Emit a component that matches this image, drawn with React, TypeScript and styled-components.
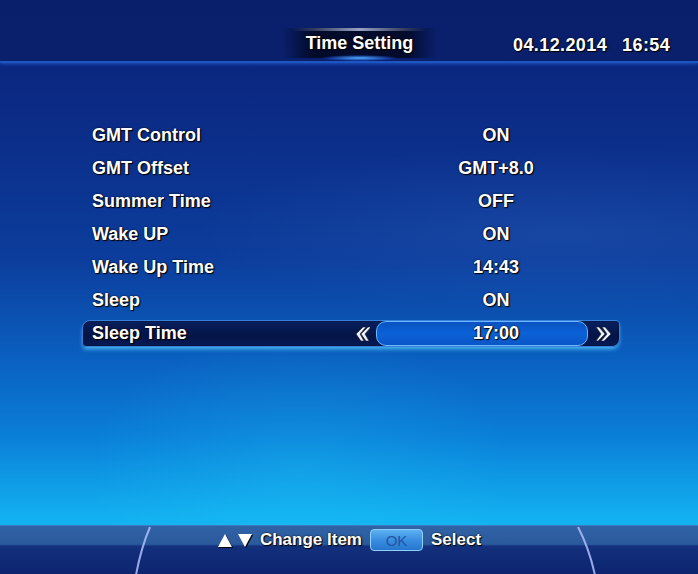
import React from "react";
import styled, { createGlobalStyle } from "styled-components";

const Global = createGlobalStyle`
  html, body { margin: 0; padding: 0; background: #061a5e; }
  body { font-family: "Liberation Sans", Arial, sans-serif; }
  * { box-sizing: border-box; }
`;

const Screen = styled.div`
  position: relative;
  width: 698px;
  height: 574px;
  overflow: hidden;
  display: flex;
  flex-direction: column;
  background:
    radial-gradient(ellipse 520px 120px at 560px 230px, rgba(120,170,255,0.10), transparent 70%),
    radial-gradient(ellipse 300px 200px at 300px 470px, rgba(40,220,255,0.18), transparent 70%),
    linear-gradient(180deg, #0a2278 0%, #0b2b86 20%, #0c3d9c 45%, #0a5fbf 62%, #0a7fd8 76%, #12b0f0 90%, #18bdf5 100%);
  color: #fff;
  font-weight: bold;
  text-shadow: 1px 1px 1px #000, 0 0 2px #000;
`;

const Header = styled.div`
  height: 63px;
  flex: 0 0 63px;
  background: linear-gradient(180deg, #0a1f6c 0%, #0a206c 100%);
  border-bottom: 2px solid #1e56c0;
  box-shadow: 0 1px 3px rgba(60,120,255,0.5);
  position: relative;
`;

const TitleWrap = styled.div`
  position: absolute;
  left: 282px;
  top: 28px;
  width: 155px;
  height: 30px;
  display: flex;
  align-items: center;
  justify-content: center;
  background: linear-gradient(90deg, rgba(0,10,40,0) 0%, rgba(0,8,35,0.9) 20%, rgba(0,8,35,0.9) 80%, rgba(0,10,40,0) 100%);
  &::before {
    content: "";
    position: absolute;
    left: 10px; right: 10px; top: 0; height: 3px;
    background: linear-gradient(90deg, transparent, rgba(190,200,230,0.8), transparent);
  }
  &::after {
    content: "";
    position: absolute;
    left: 40px; right: 40px; bottom: -3px; height: 6px;
    border-radius: 50%;
    background: radial-gradient(ellipse at center, rgba(80,170,255,1), rgba(30,90,255,0.3) 60%, transparent 75%);
  }
`;

const Title = styled.span`
  position: relative;
  font-size: 18px;
  z-index: 1;
  margin-top: 1px;
`;

const DateTime = styled.div`
  position: absolute;
  left: 513px;
  top: 35px;
  display: flex;
  gap: 15px;
  font-size: 18px;
  letter-spacing: 0.4px;
`;

const List = styled.div`
  display: flex;
  flex-direction: column;
  padding-top: 56px;
`;

const Row = styled.div`
  height: 33px;
  display: flex;
  align-items: center;
  font-size: 18px;
  padding-left: 92px;
`;

const Label = styled.div`
  width: 324px;
`;

const Value = styled.div`
  width: 160px;
  text-align: center;
`;

const SelRow = styled.div`
  margin-left: 82px;
  width: 538px;
  height: 27px;
  margin-top: 3px;
  display: flex;
  align-items: stretch;
  font-size: 18px;
  background: linear-gradient(180deg, #08205e 0%, #041446 60%, #061a55 100%);
  border: 1px solid #3a7fd8;
  border-radius: 8px 4px 8px 4px;
  box-shadow: 0 3px 4px -1px rgba(90,210,255,0.8), inset 0 0 2px rgba(0,0,0,0.6);
  position: relative;
`;

const SelLabel = styled.div`
  width: 265px;
  padding-left: 9px;
  display: flex;
  align-items: center;
`;

const Arrow = styled.div<{ $w: number }>`
  width: ${(p) => p.$w}px;
  display: flex;
  align-items: center;
  justify-content: center;
`;

const ValueBox = styled.div`
  width: 212px;
  padding-left: 28px;
  display: flex;
  align-items: center;
  justify-content: center;
  border-radius: 10px;
  border: 1px solid #6ab8ff;
  background: linear-gradient(180deg, #0a52c0 0%, #0b62d8 50%, #0a56c6 100%);
`;

const Footer = styled.div`
  margin-top: auto;
  height: 49px;
  flex: 0 0 49px;
  position: relative;
  background: linear-gradient(180deg, #2f63a6 0%, #2b5a9c 38%, #13307e 42%, #0c246e 100%);
  border-top: 1px solid #3e78c0;
  display: flex;
  justify-content: center;
  align-items: flex-start;
  padding-top: 3px;
`;

const FooterDeco = styled.svg`
  position: absolute;
  left: 0;
  top: 0;
  width: 698px;
  height: 49px;
`;

const Help = styled.div`
  position: relative;
  display: flex;
  align-items: center;
  gap: 7px;
  font-size: 17px;
  margin-left: 0px;
`;

const Tris = styled.span`
  display: inline-flex;
  gap: 4px;
  margin-right: 0px;
  filter: drop-shadow(1px 1px 0 #000);
`;

const OkKey = styled.span`
  width: 53px;
  height: 22px;
  border-radius: 4px;
  border: 1px solid #8fd0ff;
  background: linear-gradient(180deg, #5cb0f0 0%, #3a8ee0 50%, #2676cf 100%);
  display: inline-flex;
  align-items: center;
  justify-content: center;
  color: #1f55a4;
  text-shadow: none;
  font-size: 15px;
  font-weight: normal;
  margin: 0 1px;
`;

const ChevronL = () => (
  <svg width="16" height="14" viewBox="0 0 16 14">
    <path d="M9 0 L2 7 L7 14 L10 14 L6 7 L12 0 Z" fill="#eef2fa" stroke="#222" strokeWidth="0.6" />
    <path d="M14 0 L7 7 L12 14 L15 14 L11 7 L17 0 Z" fill="#eef2fa" stroke="#222" strokeWidth="0.6" />
  </svg>
);

const ChevronR = () => (
  <svg width="16" height="14" viewBox="0 0 16 14">
    <path d="M3 0 L9 7 L2 14 L0 14 L5 7 L0 0 Z" fill="#eef2fa" stroke="#222" strokeWidth="0.6" />
    <path d="M9 0 L15 7 L8 14 L5 14 L11 7 L6 0 Z" fill="#eef2fa" stroke="#222" strokeWidth="0.6" />
  </svg>
);

const TriUp = () => (
  <svg width="16" height="15" viewBox="0 0 16 15">
    <path d="M8 1 L15 14 L1 14 Z" fill="#fff" />
  </svg>
);

const TriDown = () => (
  <svg width="16" height="15" viewBox="0 0 16 15">
    <path d="M1 1 L15 1 L8 14 Z" fill="#fff" />
  </svg>
);

const items: [string, string][] = [
  ["GMT Control", "ON"],
  ["GMT Offset", "GMT+8.0"],
  ["Summer Time", "OFF"],
  ["Wake UP", "ON"],
  ["Wake Up Time", "14:43"],
  ["Sleep", "ON"],
];

export default function App() {
  return (
    <>
      <Global />
      <Screen>
        <Header>
          <TitleWrap>
            <Title>Time Setting</Title>
          </TitleWrap>
          <DateTime>
            <span>04.12.2014</span>
            <span>16:54</span>
          </DateTime>
        </Header>
        <List>
          {items.map(([l, v]) => (
            <Row key={l}>
              <Label>{l}</Label>
              <Value>{v}</Value>
            </Row>
          ))}
          <SelRow>
            <SelLabel>Sleep Time</SelLabel>
            <Arrow $w={28}>
              <ChevronL />
            </Arrow>
            <ValueBox>17:00</ValueBox>
            <Arrow $w={31}>
              <ChevronR />
            </Arrow>
          </SelRow>
        </List>
        <Footer>
          <FooterDeco viewBox="0 0 698 49">
            <path d="M150 1 Q141 22 136 49" stroke="#b0c0ff" strokeWidth="2" fill="none" opacity="0.85" />
            <path d="M578 1 Q589 22 595 49" stroke="#b0c0ff" strokeWidth="2" fill="none" opacity="0.85" />
          </FooterDeco>
          <Help>
            <Tris>
              <TriUp />
              <TriDown />
            </Tris>
            <span>Change Item</span>
            <OkKey>OK</OkKey>
            <span>Select</span>
          </Help>
        </Footer>
      </Screen>
    </>
  );
}
